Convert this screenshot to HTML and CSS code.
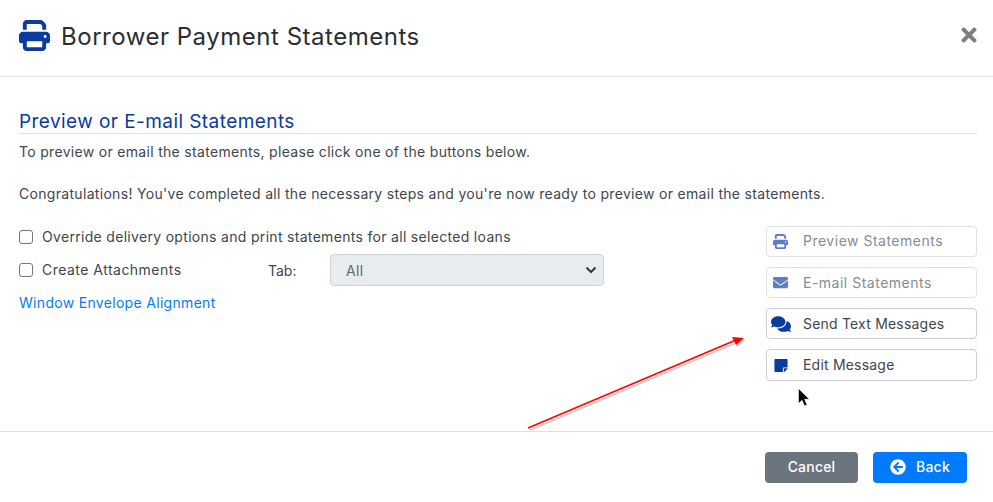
FILE: index.html
```html
<!DOCTYPE html>
<html lang="en">
<head>
<meta charset="utf-8">
<title>Borrower Payment Statements</title>
<link rel="stylesheet" href="styles.css">
</head>
<body>
<div class="modal">
  <header class="head">
    <svg class="head-icon" viewBox="0 0 512 512"><path d="M128 0C92.7 0 64 28.7 64 64v96h64V64H354.7L384 93.3V160h64V93.3c0-17-6.7-33.3-18.7-45.3L400 18.7C388 6.7 371.7 0 354.7 0H128zM384 352v32 64H128V384 368 352H384zm64 32h32c17.700 0 32-14.300 32-32V256c0-35.300-28.700-64-64-64H64c-35.300 0-64 28.700-64 64v96c0 17.700 14.300 32 32 32H64v64c0 35.300 28.700 64 64 64H384c35.300 0 64-28.700 64-64V384zM432 248a24 24 0 1 1 0 48 24 24 0 1 1 0-48z"/></svg>
    <h1 class="title">Borrower Payment Statements</h1>
    <svg class="close" viewBox="0 0 352 512"><path d="M242.72 256l100.07-100.07c12.28-12.28 12.28-32.19 0-44.48l-22.24-22.24c-12.28-12.28-32.19-12.28-44.48 0L176 189.28 75.93 89.21c-12.28-12.28-32.19-12.28-44.48 0L9.21 111.45c-12.28 12.28-12.28 32.19 0 44.48L109.28 256 9.21 356.07c-12.28 12.28-12.28 32.19 0 44.48l22.24 22.24c12.28 12.28 32.2 12.28 44.48 0L176 322.72l100.07 100.07c12.28 12.28 32.2 12.28 44.48 0l22.24-22.24c12.28-12.28 12.28-32.19 0-44.48L242.72 256z"/></svg>
  </header>
  <main class="body">
    <h2 class="section">Preview or E-mail Statements</h2>
    <p class="line">To preview or email the statements, please click one of the buttons below.</p>
    <p class="line gap">Congratulations! You've completed all the necessary steps and you're now ready to preview or email the statements.</p>
    <div class="columns">
      <div class="options">
        <label class="check first"><input type="checkbox"><span>Override delivery options and print statements for all selected loans</span></label>
        <div class="tab-row">
          <label class="check attach"><input type="checkbox"><span>Create Attachments</span></label>
          <span class="tab-label">Tab:</span>
          <div class="tab-wrap">
            <select class="tab-select" disabled><option>All</option></select>
            <svg class="chevron" viewBox="0 0 12 8" aria-hidden="true"><path d="M1.500 1.500L6 6L10.500 1.500"/></svg>
          </div>
        </div>
        <a class="link" href="#">Window Envelope Alignment</a>
      </div>
      <div class="actions">
        <button class="action off raised"><svg viewBox="0 0 512 512"><path d="M128 0C92.700 0 64 28.700 64 64v96h64V64H354.700L384 93.300V160h64V93.300c0-17-6.700-33.300-18.700-45.300L400 18.700C388 6.700 371.700 0 354.700 0H128zM384 352v32 64H128V384 368 352H384zm64 32h32c17.700 0 32-14.300 32-32V256c0-35.300-28.700-64-64-64H64c-35.300 0-64 28.700-64 64v96c0 17.700 14.300 32 32 32H64v64c0 35.300 28.700 64 64 64H384c35.300 0 64-28.700 64-64V384zM432 248a24 24 0 1 1 0 48 24 24 0 1 1 0-48z"/></svg><span>Preview Statements</span></button>
        <button class="action off"><svg viewBox="0 0 512 512"><path d="M502.300 190.800c3.900-3.100 9.700-.2 9.700 4.700V400c0 26.500-21.500 48-48 48H48c-26.500 0-48-21.500-48-48V195.600c0-5 5.700-7.800 9.700-4.700 22.400 17.400 52.100 39.500 154.100 113.600 21.100 15.400 56.700 47.800 92.200 47.600 35.700.3 72-32.800 92.300-47.600 102-74.100 131.600-96.300 154-113.700zM256 320c23.200.4 56.600-29.200 73.400-41.400 132.700-96.300 142.800-104.700 173.400-128.700 5.800-4.500 9.200-11.500 9.200-18.900v-19c0-26.500-21.500-48-48-48H48C21.500 64 0 85.500 0 112v19c0 7.400 3.400 14.300 9.200 18.900 30.600 23.900 40.700 32.400 173.400 128.700 16.800 12.200 50.200 41.800 73.400 41.400z"/></svg><span>E-mail Statements</span></button>
        <button class="action"><svg class="wide" viewBox="0 0 576 512"><path d="M416 192c0-88.400-93.100-160-208-160S0 103.600 0 192c0 34.300 14.100 65.900 38 92-13.400 30.200-35.500 54.200-35.800 54.500-2.200 2.300-2.800 5.700-1.500 8.700S4.800 352 8 352c36.600 0 66.900-12.300 88.700-25 32.200 15.700 70.300 25 111.300 25 114.900 0 208-71.600 208-160zm122 220c23.900-26 38-57.700 38-92 0-66.900-53.500-124.200-129.300-148.100.9 6.600 1.300 13.300 1.300 20.100 0 105.900-107.700 192-240 192-10.800 0-21.300-.8-31.700-1.900C207.800 439.600 281.800 480 368 480c41 0 79.100-9.200 111.300-25 21.800 12.700 52.100 25 88.700 25 3.200 0 6.100-1.900 7.300-4.800 1.300-2.900.7-6.300-1.500-8.700-.3-.3-22.400-24.200-35.800-54.500z"/></svg><span>Send Text Messages</span></button>
        <button class="action tall raised"><svg class="note" viewBox="0 0 448 512"><path d="M312 320h136V56c0-13.300-10.700-24-24-24H24C10.700 32 0 42.700 0 56v400c0 13.300 10.700 24 24 24h264V344c0-13.200 10.800-24 24-24zm129 55l-98 98c-4.500 4.500-10.600 7-17 7h-6V352h128v6.100c0 6.300-2.500 12.400-7 16.900z"/></svg><span>Edit Message</span></button>
      </div>
    </div>
  </main>
  <footer class="foot">
    <button class="btn cancel">Cancel</button>
    <button class="btn back"><svg viewBox="0 0 512 512"><path d="M256 504C119 504 8 393 8 256S119 8 256 8s248 111 248 248-111 248-248 248zm28.900-143.600L209.400 288H392c13.300 0 24-10.700 24-24v-16c0-13.300-10.700-24-24-24H209.400l75.500-72.400c9.700-9.300 9.900-24.800.4-34.300l-11-10.900c-9.400-9.400-24.600-9.400-33.900 0L107.700 239c-9.400 9.400-9.400 24.600 0 33.900l132.700 132.700c9.400 9.400 24.600 9.400 33.900 0l11-10.900c9.500-9.500 9.300-25-.4-34.300z"/></svg>Back</button>
  </footer>
  <svg class="arrow" viewBox="0 0 993 502" aria-hidden="true">
    <path class="arrow-shadow" d="M530 430 L738 342"/>
    <path class="arrow-shadow-head" d="M745 340 L733 338 L737 347Z"/>
    <path class="arrow-line" d="M528 428 L736 340"/>
    <path class="arrow-head" d="M744 338 L732 337 L736 345Z"/>
  </svg>
  <svg class="cursor" viewBox="0 0 12 19" aria-hidden="true"><path d="M0.500 0.500V15.500L4 12.300L6.500 18L9 17L6.600 11.300H11.300Z"/></svg>
</div>
</body>
</html>
```
FILE: styles.css
```css
* { box-sizing: border-box; }
html, body { margin: 0; height: 100%; }
body { background: #fff; color: #40464c; font-family: Inter, "Liberation Sans", sans-serif; font-size: 14px; letter-spacing: .31px; }
.modal { position: relative; width: 993px; height: 502px; display: flex; flex-direction: column; overflow: hidden; }
.head { height: 77px; flex: none; display: flex; align-items: center; padding: 0 16px 5px 19px; border-bottom: 1px solid #dee2e6; }
.head-icon { width: 31px; height: 31px; fill: #0a3b9e; flex: none; margin-right: 11px; }
.title { margin: 2px 0 0; font-size: 24px; font-weight: 400; letter-spacing: .52px; color: #2a2e33; flex: 1; line-height: 30px; }
.close { width: 16px; height: 22px; fill: #7d7f82; flex: none; margin-top: -2px; }
.body { flex: 1; padding: 32px 16px 0 19px; }
.section { margin: 0; padding-top: 1px; font-size: 19px; font-weight: 400; letter-spacing: .43px; line-height: 24px; color: #0a3b9e; border-bottom: 1px solid #dee2e6; height: 25px; }
.line { margin: 0; line-height: 20px; padding-top: 8px; height: 28px; }
.line.gap { padding-top: 0; margin-top: 22px; height: 20px; }
.columns { display: flex; justify-content: space-between; margin-top: 22px; }
.options { display: flex; flex-direction: column; padding-top: 1px; }
.check { display: flex; align-items: center; gap: 9px; line-height: 20px; }
.check input { appearance: none; margin: 0; width: 14px; height: 14px; border: 1px solid #767676; border-radius: 3px; background: #fff; flex: none; }
.check.first { height: 20px; }
.tab-row { display: flex; align-items: center; margin-top: 7px; height: 32px; }
.attach { width: 249px; letter-spacing: .48px; }
.tab-label { width: 62px; letter-spacing: 0; }
.tab-wrap { position: relative; width: 274px; height: 32px; }
.tab-select { appearance: none; display: block; width: 100%; height: 32px; padding: 0 15px; border: 1px solid #ced4da; border-radius: 4px; background: #e9ecef; color: #626970; font: inherit; letter-spacing: .3px; opacity: 1; }
.chevron { position: absolute; right: 7px; top: 12px; width: 12px; height: 8px; fill: none; stroke: #343a40; stroke-width: 2; pointer-events: none; }
.link { color: #007bff; text-decoration: none; line-height: 20px; margin-top: 7px; }
.actions { width: 211px; display: flex; flex-direction: column; gap: 10px; }
.action { height: 31px; display: flex; align-items: center; padding: 0 0 0 5px; background: #fff; border: 1px solid #c9ced6; border-radius: 4px; font: inherit; letter-spacing: .2px; color: #40464c; text-align: left; }
.action.tall { height: 32px; }
.action.raised span { margin-bottom: 2px; }
.action svg { width: 15px; height: 15px; fill: #0a3b9e; margin: 0 15px 0 1px; flex: none; }
.action svg.wide { width: 20px; height: 18px; margin-left: -1px; margin-right: 12px; }
.action svg.note { width: 14px; height: 15px; margin-left: 2px; margin-right: 15px; }
.action.off { border-color: #dfe2e7; color: #868c93; letter-spacing: .5px; }
.action.off svg { fill: #5f7cc4; }
.foot { height: 71px; flex: none; border-top: 1px solid #dee2e6; display: flex; justify-content: flex-end; gap: 15px; padding: 20px 26px 0 0; }
.btn { height: 31px; border: 0; border-radius: 4px; padding: 0 0 2px; color: #fff; font: 500 14px Inter, "Liberation Sans", sans-serif; letter-spacing: .2px; display: flex; align-items: center; justify-content: center; }
.cancel { width: 93px; background: #6c757d; }
.back { width: 94px; background: #007bff; gap: 10px; }
.back svg { width: 16px; height: 16px; fill: #fff; }
.arrow { position: absolute; left: 0; top: 0; width: 993px; height: 502px; pointer-events: none; }
.arrow-line { stroke: #f00; stroke-width: 1.6; fill: none; }
.arrow-head { fill: #f00; }
.arrow-shadow { stroke: #bbb; stroke-width: 2; fill: none; opacity: .7; }
.arrow-shadow-head { fill: #bbb; opacity: .7; }
.cursor { position: absolute; left: 798px; top: 388px; width: 12px; height: 19px; fill: #000; stroke: #fff; stroke-width: .6; }
```
